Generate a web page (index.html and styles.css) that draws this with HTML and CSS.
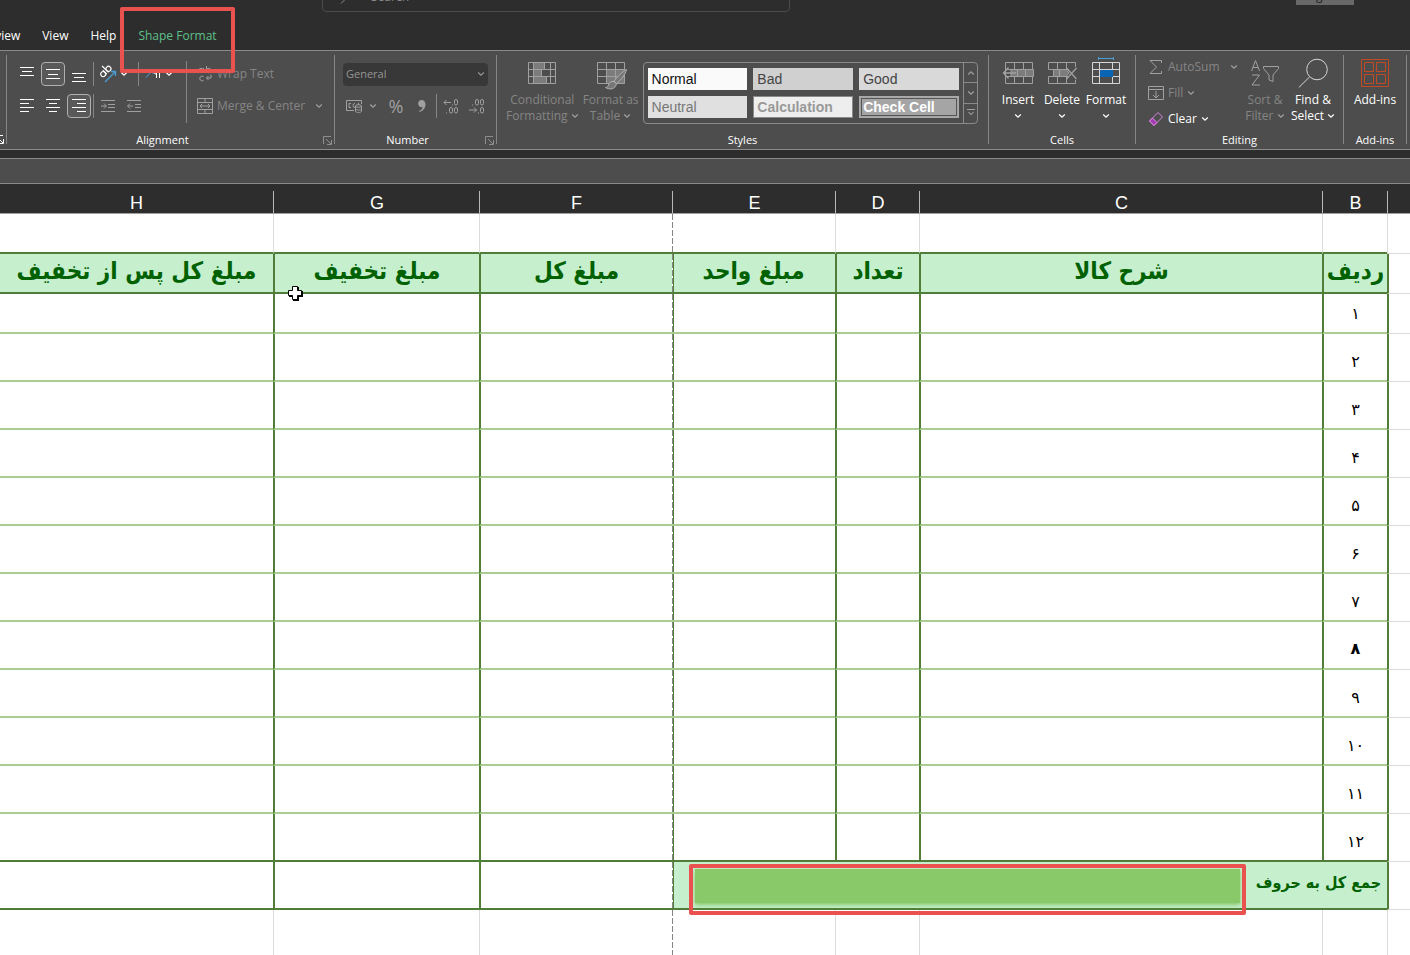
FILE: index.html
```html
<!DOCTYPE html>
<html lang="en">
<head>
<meta charset="utf-8">
<title>Invoice - Spreadsheet</title>
<link rel="stylesheet" href="styles.css">
</head>
<body>
<svg class="defs" aria-hidden="true">
  <symbol id="chev" viewBox="0 0 8 8"><path d="M1.2 2.5 4 5.2 6.8 2.5" fill="none" stroke="currentColor" stroke-width="1.2"/></symbol>
  <symbol id="launch" viewBox="0 0 9 9"><path d="M.5 8V.5H8M3 3l5 5M8.500 4v4.500H4" fill="none" stroke="currentColor"/></symbol>
</svg>

<header class="titlebar">
  <label class="search">
    <svg width="16" height="16" viewBox="0 0 16 16"><circle cx="10" cy="6" r="4.500"/><path d="M7 9.500 2 14.500"/></svg>
    <input type="text" placeholder="Search" aria-label="Search">
  </label>
  <button class="signin">Sign in</button>
</header>

<nav class="tabs">
  <button class="tab">Review</button>
  <button class="tab">View</button>
  <button class="tab">Help</button>
  <button class="tab tab-context">Shape Format<span class="mark mark-tab"></span></button>
</nav>

<section class="ribbon">
  <div class="group group-prev"><svg class="launch on"><use href="#launch"/></svg></div>

  <div class="group group-align">
    <div class="body">
      <div class="rows">
        <div class="row">
          <button class="ic" aria-label="Top align"><svg width="16" height="16"><path d="M1 1.500h14M3 5.500h10M1 9.500h14"/></svg></button>
          <button class="ic sel" aria-label="Middle align"><svg width="16" height="16"><path d="M1 3.500h14M3 8.500h10M1 12.500h14"/></svg></button>
          <button class="ic" aria-label="Bottom align"><svg width="16" height="16"><path d="M1 7.500h14M3 11.500h10M1 15.500h14"/></svg></button>
          <i class="sep"></i>
          <button class="ic" aria-label="Orientation"><svg width="18" height="18" viewBox="0 0 18 18"><g transform="rotate(-45 7 7)" stroke-width="1.200"><circle cx="3.500" cy="6.500" r="2.500"/><path d="M6 3.500v5.500M8.500 0v9"/><circle cx="11" cy="6.500" r="2.500"/></g><path class="blue" d="M6 17 16.500 6.500M12 6.500h4.500V11" stroke-width="1.300"/></svg></button>
          <button class="dd" aria-label="Orientation options"><svg class="chev"><use href="#chev"/></svg></button>
          <i class="sep"></i>
          <button class="ic" aria-label="Text direction"><svg width="18" height="16" viewBox="0 0 18 16"><path class="blue" d="M2 11.500 9 4M5 4h4v4"/><path d="M12.500 12V4M15.500 12V4M17 4h-5a2 2 0 0 0 0 4"/></svg></button>
          <button class="dd" aria-label="Text direction options"><svg class="chev"><use href="#chev"/></svg></button>
        </div>
        <div class="row">
          <button class="ic" aria-label="Align left"><svg width="16" height="16"><path d="M1 1.500h14M1 5.500h9M1 9.500h14M1 13.500h9"/></svg></button>
          <button class="ic" aria-label="Center"><svg width="16" height="16"><path d="M1 1.500h14M4 5.500h8M1 9.500h14M4 13.500h8"/></svg></button>
          <button class="ic sel" aria-label="Align right"><svg width="16" height="16"><path d="M1 1.500h14M6 5.500h9M1 9.500h14M6 13.500h9"/></svg></button>
          <i class="sep"></i>
          <button class="ic dim" aria-label="Decrease indent"><svg width="16" height="16"><path d="M1 2.500h14M8 6.500h7M8 9.500h7M1 13.500h14M1 8h5M4 5.500 6.500 8 4 10.500"/></svg></button>
          <button class="ic dim" aria-label="Increase indent"><svg width="16" height="16"><path d="M1 2.500h14M9 6.500h6M9 9.500h6M1 13.500h14M2 8h5M4 5.500 1.500 8 4 10.500"/></svg></button>
        </div>
      </div>
      <i class="sep tall"></i>
      <div class="rows">
        <button class="row text dim"><svg width="16" height="18" viewBox="0 0 16 18"><circle cx="4" cy="5.500" r="2.200"/><path d="M6.500 3v5M9.500 1v7M6.500 11.500a2.400 2.400 0 1 0 0 4M14 9.500v3.500h-4.500M11.500 11 9.500 13l2 2"/><circle cx="11.700" cy="5.500" r="2.200"/></svg>Wrap Text</button>
        <button class="row text dim"><svg width="16" height="16"><path d="M.5.5h15v15H.5zM.5 4.500h15M.5 11.500h15M8 .5v4M8 11.500v4M3 8h10M5 6 3 8l2 2M11 6l2 2-2 2"/></svg>Merge &amp; Center<svg class="chev far"><use href="#chev"/></svg></button>
      </div>
    </div>
    <div class="label">Alignment<svg class="launch"><use href="#launch"/></svg></div>
  </div>

  <div class="group group-number">
    <div class="body">
      <div class="rows">
        <div class="row"><span class="picker"><select aria-label="Number format"><option>General</option></select><svg class="chev"><use href="#chev"/></svg></span></div>
        <div class="row numrow dim">
          <button class="ic" aria-label="Accounting format"><svg width="18" height="16" viewBox="0 0 18 16"><path d="M8 12.500H.5v-10h15V6M5 5.500H3v4h2M9 5.500a2 2 0 0 0 0 4M12.500 5v2"/><path d="M9.500 8v5c0 2 6 2 6 0V8M9.500 10.500c0 2 6 2 6 0"/><ellipse cx="12.500" cy="8" rx="3" ry="1.300"/></svg></button>
          <button class="dd" aria-label="Accounting options"><svg class="chev"><use href="#chev"/></svg></button>
          <button class="ic pct" aria-label="Percent style">%</button>
          <button class="ic" aria-label="Comma style"><svg width="10" height="14" viewBox="0 0 10 14"><path class="solid" d="M4.500 1C7 1 8.500 2.800 8.500 5.500 8.500 9 6 12 2.500 13l-.4-1C4.500 11 5.700 9.500 5.700 8 3.500 8.800 1.200 7 1.200 4.500 1.200 2.500 2.600 1 4.500 1z"/></svg></button>
          <i class="sep"></i>
          <button class="ic" aria-label="Increase decimal"><svg width="16" height="16" viewBox="0 0 16 16"><path d="M1 4.500h7M3.500 2 1 4.500 3.500 7M9.500 6.500v1M3.500 14.500v1"/><rect x="11.500" y="1.500" width="3" height="5.500" rx="1.500"/><rect x="6.500" y="9.500" width="3" height="5.500" rx="1.500"/><rect x="11.500" y="9.500" width="3" height="5.500" rx="1.500"/></svg></button>
          <button class="ic" aria-label="Decrease decimal"><svg width="16" height="16" viewBox="0 0 16 16"><path d="M0 12h7.500M5 9.500 7.500 12 5 14.500M9.500 14.500v1M3.500 6.500v1"/><rect x="6.500" y="1.500" width="3" height="5.500" rx="1.500"/><rect x="11.500" y="1.500" width="3" height="5.500" rx="1.500"/><rect x="11.500" y="9.500" width="3" height="5.500" rx="1.500"/></svg></button>
        </div>
      </div>
    </div>
    <div class="label">Number<svg class="launch"><use href="#launch"/></svg></div>
  </div>

  <div class="group group-styles">
    <div class="body">
      <button class="big dim"><svg width="30" height="28" viewBox="0 0 30 28"><path class="fill" d="M6 4h11v7H6zM6 11h8v7H6zM6 18h13v7H6z"/><path d="M1.500 3.500h27v21h-27zM1.500 10.500h27M1.500 17.500h27M6.500 3.500v21M17.500 3.500v7M14.500 10.500v7M19.500 17.500v7M23.500 3.500v21"/></svg><span>Conditional<br>Formatting <svg class="chev"><use href="#chev"/></svg></span></button>
      <button class="big dim"><svg width="30" height="28" viewBox="0 0 30 28"><path class="fill" d="M11 11h17v14H11z"/><path d="M1.500 3.500h27v21h-27zM1.500 10.500h27M1.500 17.500h27M10.500 3.500v21M19.500 3.500v21"/><path class="brush" d="M30.500 10.500c-4 2-10 8-12.500 12l2.500 2c4-3 9-9 10-14zM18 22.500c-3-.5-5 1-5.500 3.500-.5 2-2 2.500-3 2.500 4 2.500 10 2 11-4z"/></svg><span>Format as<br>Table <svg class="chev"><use href="#chev"/></svg></span></button>
      <div class="gallery">
        <div class="swatches">
          <button class="sw s-normal">Normal</button><button class="sw s-bad">Bad</button><button class="sw s-good">Good</button>
          <button class="sw s-neutral">Neutral</button><button class="sw s-calc">Calculation</button><button class="sw s-check">Check Cell</button>
        </div>
        <div class="scroll">
          <button aria-label="Previous styles"><svg class="chev flip"><use href="#chev"/></svg></button>
          <button aria-label="Next styles"><svg class="chev"><use href="#chev"/></svg></button>
          <button class="more" aria-label="More styles"><svg class="chev"><use href="#chev"/></svg></button>
        </div>
      </div>
    </div>
    <div class="label">Styles</div>
  </div>

  <div class="group group-cells">
    <div class="body">
      <button class="big"><svg class="grey" width="30" height="28" viewBox="1 0 30 28"><path d="M3.500 3.500h27v21h-27zM3.500 10.500h27M3.500 17.500h27M12.500 3.500v21M21.500 3.500v21"/><path class="fill line" d="M9 10.500h22.500v7H9z"/><path d="M15.500 10.500v7M23.500 10.500v7"/><path d="M1.500 14H14M6.500 8.500 1.500 14l5 5.500" stroke-width="1.400"/></svg><span>Insert<br><svg class="chev"><use href="#chev"/></svg></span></button>
      <button class="big"><svg class="grey" width="30" height="28" viewBox="0 0 30 28"><path d="M28.500 8V3.500h-27v7H22M28.500 21v3.500h-27v-7H22M10.500 3.500v7M19.500 3.500v7M10.500 17.500v7M19.500 17.500v7"/><path class="fill line" d="M6.500 10.500H19l3 3.500-3 3.500H6.500z"/><path d="M12.500 10.500v7M19.500 9 29.500 20M29.500 9 19.500 20" stroke-width="1.300"/></svg><span>Delete<br><svg class="chev"><use href="#chev"/></svg></span></button>
      <button class="big"><svg class="light" width="30" height="28" viewBox="0 0 30 28"><path d="M1.500 3.500h27v21h-27zM1.500 10.500h27M1.500 17.500h27M8.500 3.500v21M21.500 3.500v21"/><path class="bluefill" d="M9 11h13v7H9z"/><path class="blue" d="M7.500-.5h15M7.500-2v3M22.500-2v3"/></svg><span>Format<br><svg class="chev"><use href="#chev"/></svg></span></button>
    </div>
    <div class="label">Cells</div>
  </div>

  <div class="group group-edit">
    <div class="body">
      <div class="list">
        <button class="text dim"><svg width="16" height="16"><path d="M13.500 4V1.500H2L8.500 8 2 14.500h11.500V12"/></svg>AutoSum<svg class="chev far"><use href="#chev"/></svg></button>
        <button class="text dim"><svg width="16" height="16"><path d="M.5 1.500h15v13H.5zM.5 4.500h15M8 6v7M5 10l3 3 3-3"/></svg>Fill<svg class="chev"><use href="#chev"/></svg></button>
        <button class="text"><svg width="16" height="16"><path class="pink" d="M10 1.500 14.500 6 6 14.500 1.500 10z"/><path class="pinkfill" d="M4.500 7 1.500 10 6 14.500l3-3z"/></svg>Clear<svg class="chev"><use href="#chev"/></svg></button>
      </div>
      <button class="big dim"><svg width="30" height="28" viewBox="0 0 30 28"><path d="M1.500 12 5.500 1.500 9.500 12M3 8.500h5M2 16h7.500L2 26h8M13.500 7.500h15v2l-5.500 6.500v6.500l-4-1.500v-5L13.500 9.500z"/></svg><span>Sort &amp;<br>Filter <svg class="chev"><use href="#chev"/></svg></span></button>
      <button class="big"><svg class="light" width="30" height="28" viewBox="0 0 30 28"><circle cx="19" cy="10.500" r="10.300"/><path d="M11.500 18 .8 28.500"/></svg><span>Find &amp;<br>Select <svg class="chev"><use href="#chev"/></svg></span></button>
    </div>
    <div class="label">Editing</div>
  </div>

  <div class="group group-addins">
    <div class="body">
      <button class="big"><svg class="orange" width="30" height="28" viewBox="0 1 30 28"><path d="M1.500 1.500h27v27h-27zM4.500 4.500h9v9h-9zM16.500 4.500h9v9h-9zM4.500 16.500h9v9h-9zM16.500 16.500h9v9h-9z"/></svg><span>Add-ins</span></button>
    </div>
    <div class="label">Add-ins</div>
  </div>
</section>

<div class="formula"></div>

<table class="sheet" dir="rtl" lang="fa">
  <colgroup><col class="ca"><col class="cb"><col class="cc"><col class="cd"><col class="ce"><col class="cf"><col class="cg"><col></colgroup>
  <thead>
    <tr><th></th><th>B</th><th>C</th><th>D</th><th>E</th><th>F</th><th>G</th><th>H</th></tr>
  </thead>
  <tbody>
    <tr class="blank"><td></td><td></td><td></td><td></td><td class="brk"></td><td></td><td></td><td></td></tr>
    <tr class="heads"><td></td><th>ردیف</th><th>شرح کالا</th><th>تعداد</th><th class="brk">مبلغ واحد</th><th>مبلغ کل</th><th>مبلغ تخفیف<svg class="cursor" width="17" height="17" viewBox="0 0 17 17"><path d="M6 2h6v4h4v6h-4v4H6v-4H2V6h4z" fill="#000"/><path d="M5.500 1.500h5v4h4v5h-4v4h-5v-4h-4v-5h4z" fill="#fff" stroke="#000"/></svg></th><th>مبلغ کل پس از تخفیف</th></tr>
    <tr class="item first"><td></td><td>۱</td><td></td><td></td><td class="brk"></td><td></td><td></td><td></td></tr>
    <tr class="item"><td></td><td>۲</td><td></td><td></td><td class="brk"></td><td></td><td></td><td></td></tr>
    <tr class="item"><td></td><td>۳</td><td></td><td></td><td class="brk"></td><td></td><td></td><td></td></tr>
    <tr class="item"><td></td><td>۴</td><td></td><td></td><td class="brk"></td><td></td><td></td><td></td></tr>
    <tr class="item"><td></td><td>۵</td><td></td><td></td><td class="brk"></td><td></td><td></td><td></td></tr>
    <tr class="item"><td></td><td>۶</td><td></td><td></td><td class="brk"></td><td></td><td></td><td></td></tr>
    <tr class="item"><td></td><td>۷</td><td></td><td></td><td class="brk"></td><td></td><td></td><td></td></tr>
    <tr class="item"><td></td><td class="bold">۸</td><td></td><td></td><td class="brk"></td><td></td><td></td><td></td></tr>
    <tr class="item"><td></td><td>۹</td><td></td><td></td><td class="brk"></td><td></td><td></td><td></td></tr>
    <tr class="item"><td></td><td>۱۰</td><td></td><td></td><td class="brk"></td><td></td><td></td><td></td></tr>
    <tr class="item"><td></td><td>۱۱</td><td></td><td></td><td class="brk"></td><td></td><td></td><td></td></tr>
    <tr class="item last"><td></td><td>۱۲</td><td></td><td></td><td class="brk"></td><td></td><td></td><td></td></tr>
    <tr class="total"><td></td><th colspan="4" class="brk">جمع کل به حروف<span class="shape"></span><span class="mark mark-total"></span></th><td></td><td></td><td></td></tr>
    <tr class="blank end"><td></td><td></td><td></td><td></td><td class="brk"></td><td></td><td></td><td></td></tr>
  </tbody>
</table>
</body>
</html>
```
FILE: styles.css
```css
* { box-sizing: border-box; }
body {
  margin: 0;
  background: #fff;
  color: #fff;
  font: 12px/16px "Open Sans", "Noto Sans", sans-serif;
  overflow: hidden;
}
button, input, select { font: inherit; color: inherit; }
button { background: none; border: 0; padding: 0; }
svg { fill: none; stroke: currentColor; flex: none; }
.defs { position: absolute; width: 0; height: 0; }

/* Title bar */
.titlebar {
  display: flex;
  align-items: flex-end;
  height: 12px;
  padding: 0 56px 0 322px;
  background: #2d2d2d;
  overflow: hidden;
}
.search {
  display: flex;
  align-items: center;
  gap: 16px;
  width: 468px;
  height: 30px;
  padding: 0 16px;
  border: 1px solid #4b4b4b;
  border-radius: 4px;
  color: #8a8a8a;
}
.search input { flex: 1; border: 0; padding: 0; background: none; outline: 0; }
.search input::placeholder { color: #8a8a8a; }
.signin {
  width: 58px;
  height: 18px;
  margin: 0 0 7px auto;
  background: #686868;
  color: #222;
  line-height: 18px;
}

/* Tabs */
.tabs {
  display: flex;
  gap: 22px;
  height: 38px;
  padding-top: 16px;
  margin-left: -19px;
  background: #2d2d2d;
}
.tab { position: relative; height: 16px; white-space: nowrap; }
.tab-context { color: #5fc08a; }
.mark {
  position: absolute;
  border: 4px solid #e9524f;
  border-radius: 2px;
  z-index: 2;
}
.mark-tab { left: -18px; width: 115px; top: -21px; height: 66px; }

/* Ribbon */
.ribbon {
  display: flex;
  height: 100px;
  padding: 4px 3px 0 0;
  background: #4d4d4d;
  border-top: 1px solid #8a8a8a;
  border-bottom: 1px solid #8a8a8a;
}
.group {
  display: flex;
  flex-direction: column;
  height: 89px;
  border-right: 1px solid #858585;
}
.group-prev { width: 7px; justify-content: flex-end; }
.group-align { width: 328px; }
.group-number { width: 162px; }
.group-styles { flex: 1; }
.group-cells { width: 147px; }
.group-edit { width: 208px; }
.group-addins { width: 63px; }
.body { display: flex; flex: 1; }
.label { position: relative; height: 16px; margin-bottom: -4px; text-align: center; line-height: 16px; font-size: 11px; }
.group-align .label, .group-number .label { padding-right: 16px; }
.launch { width: 9px; height: 9px; color: #8e8e8e; }
.launch.on { color: #fff; margin-left: -5px; }
.label .launch { position: absolute; right: 2px; top: 4px; }
.chev { width: 8px; height: 8px; }
.dim { color: #858585; }
.dim svg, .grey { color: #a0a0a0; }
.light { color: #d6d6d6; }
.rows { display: flex; flex-direction: column; padding-top: 3px; }
.row { display: flex; align-items: center; height: 32px; }
.group-align .rows:first-child { padding-left: 8px; width: 179px; }
.ic {
  display: flex;
  flex: none;
  align-items: center;
  justify-content: center;
  width: 24px;
  height: 24px;
  margin-right: 2px;
  border-radius: 4px;
}
.sel { border: 1px solid #b0b0b0; background: #595959; }
.dd { display: flex; flex: none; width: 8px; height: 24px; align-items: center; margin: 0 10px 0 -2px; }
.sep { flex: none; width: 1px; height: 24px; background: #858585; margin-right: 2px; }
.sep.tall { height: 62px; margin: 6px 10px 0 0; }
.blue { stroke: #4b9fd8; }
.bluefill { fill: #0a64b4; stroke: none; }
.text { display: flex; align-items: center; gap: 4px; white-space: nowrap; }
.far { margin-left: 6px; }

.group-number .rows { padding-left: 8px; }
.picker {
  display: flex;
  align-items: center;
  width: 145px;
  height: 23px;
  padding: 0 3px;
  background: #383838;
  border-radius: 4px;
  color: #969696;
}
.picker select { flex: 1; appearance: none; background: none; border: 0; padding: 0; font-size: 11px; }
.numrow .dd { margin: 0 2px 0 0; }
.pct { font-size: 18px; margin-left: 5px; color: #a0a0a0; }
.solid { fill: currentColor; stroke: none; }
.fill { fill: #7c7c7c; stroke: none; }
.fill.line { stroke: currentColor; }
.brush { fill: #777; stroke: #b0b0b0; }

.big {
  display: flex;
  flex-direction: column;
  align-items: center;
  gap: 5px;
  padding-top: 4px;
  line-height: 16px;
  white-space: nowrap;
  align-self: flex-start;
}
.big > svg { overflow: visible; }
.big span { display: block; }
.group-styles .body { padding-left: 9px; gap: 4px; }
.group-cells .body { padding-left: 7px; }
.group-cells .big { width: 44px; }
.gallery {
  display: flex;
  flex: 1;
  height: 62px;
  margin: 7px 10px 0 0;
  border: 1px solid #8a8a8a;
  border-radius: 4px;
}
.swatches {
  display: grid;
  flex: 1;
  grid-template-columns: repeat(3, 1fr);
  grid-auto-rows: 22px;
  gap: 6px;
  padding: 5px 4px;
}
.sw { padding: 0 4px; text-align: left; font: 14px/20px "Liberation Sans", Arial, sans-serif; }
.s-normal { background: #fafafa; color: #111; }
.s-bad { background: #d0d0d0; color: #444; }
.s-good { background: #d9d9d9; color: #444; }
.s-neutral { background: #e0e0e0; color: #777; }
.s-calc { background: #eee; color: #999; border: 1px solid #8a8a8a; padding: 0 3px; font-weight: bold; line-height: 18px; }
.s-check { background: #a5a5a5; color: #fff; border: 3px double #555; outline: 1px solid #aaa; outline-offset: -1px; padding: 0 1px; font-weight: bold; line-height: 16px; }
.scroll { display: flex; flex-direction: column; width: 14px; border-left: 1px solid #8a8a8a; color: #a0a0a0; }
.scroll button { flex: 1; display: flex; align-items: center; justify-content: center; }
.scroll button + button { border-top: 1px solid #8a8a8a; }
.flip { transform: rotate(180deg); }
.more .chev { border-top: 1px solid currentColor; }

.list { display: flex; flex-direction: column; width: 104px; margin-top: -1px; padding-left: 12px; }
.list .text { height: 26px; }
.group-edit .big { width: 46px; }
.group-edit .big:nth-child(2) { width: 50px; }
.pink { stroke: #d98ae0; }
.pinkfill { fill: #a33cb0; stroke: #d98ae0; }
.orange { color: #c24a22; }
.group-addins .big { width: 62px; }

/* Formula bar */
.formula {
  height: 34px;
  background: #4d4d4d;
  border-top: 8px solid #2d2d2d;
  border-bottom: 1px solid #8a8a8a;
  box-shadow: inset 0 1px #8a8a8a;
}

/* Sheet */
.sheet {
  width: 100%;
  table-layout: fixed;
  border-collapse: separate;
  border-spacing: 0;
  color: #000;
}
.ca { width: 23px; }
.cb { width: 65px; }
.cc { width: 403px; }
.cd { width: 84px; }
.ce { width: 163px; }
.cf { width: 193px; }
.cg { width: 206px; }
.sheet th, .sheet td { padding: 0; text-align: center; }
.sheet thead th {
  height: 30px;
  padding: 8px 0 0 2px;
  background: linear-gradient(#b8b8b8, #b8b8b8) left bottom / 1px 22px no-repeat #2d2d2d;
  border-bottom: 1px solid #a0a0a0;
  color: #fff;
  font: 18px/20px "Liberation Sans", Arial, sans-serif;
}
.sheet thead th:last-child { background: #2d2d2d; padding-left: 0; }
.sheet tbody td, .sheet tbody th { border-left: 2px solid #507e38; }
.sheet tbody td:last-child, .sheet tbody th:last-child { border-left: 0; }
.sheet tbody tr td:first-child { border-bottom: 1px solid #dcdcdc; }
.sheet .blank td { height: 40px; border-left: 1px solid #dcdcdc; border-bottom: 2px solid #507e38; }
.sheet .end td, .sheet tbody .end td:first-child { height: 45px; border-bottom: 0; }
.sheet tbody .brk {
  border-left: 0;
  background-image: repeating-linear-gradient(#858585 0 6px, #fff 6px 8px), linear-gradient(#507e38, #507e38);
  background-size: 1px 100%, 1px 100%;
  background-position: 0 0, 1px 0;
  background-repeat: no-repeat;
}
.sheet tbody .blank .brk { background-size: 1px 100%, 0 0; }
.heads th, .total th { position: relative; background-color: #c6efce; color: #006100; font-family: "DejaVu Sans Condensed", "DejaVu Sans", sans-serif; font-weight: bold; }
.sheet .heads th { height: 40px; padding-bottom: 4px; border-bottom: 2px solid #507e38; font-size: 24px; line-height: 32px; white-space: nowrap; }
.cursor { position: absolute; left: 12px; bottom: -10px; stroke: none; z-index: 2; }
.sheet .item td { height: 48px; border-bottom: 2px solid #a9cd92; font: 16px/24px "DejaVu Sans", sans-serif; padding-top: 10px; }
.sheet .first td { height: 40px; padding-top: 2px; }
.sheet .item .bold { font-weight: bold; padding-top: 8px; }
.sheet .last td { border-bottom-color: #507e38; }
.sheet tbody .item td:first-child { border-bottom: 1px solid #dcdcdc; }
.sheet tbody .blank td:first-child { border-left: 1px solid #dcdcdc; border-bottom: 1px solid #dcdcdc; }
.sheet tbody .end td:first-child { border-bottom: 0; }
.sheet tbody .blank td:last-child { border-left: 0; }
.sheet .total td, .sheet .total th { height: 48px; border-bottom: 2px solid #507e38; }
.sheet .total th { text-align: right; padding: 0 6px 4px 0; font-size: 16px; line-height: 24px; }
.shape {
  position: absolute;
  left: 23px;
  right: 147px;
  top: 7px;
  height: 34px;
  background: #8ac96a;
  box-shadow: 0 2px 4px #8ac96a;
}
.mark-total { left: 17px; right: 141px; top: 2px; height: 51px; }
```
